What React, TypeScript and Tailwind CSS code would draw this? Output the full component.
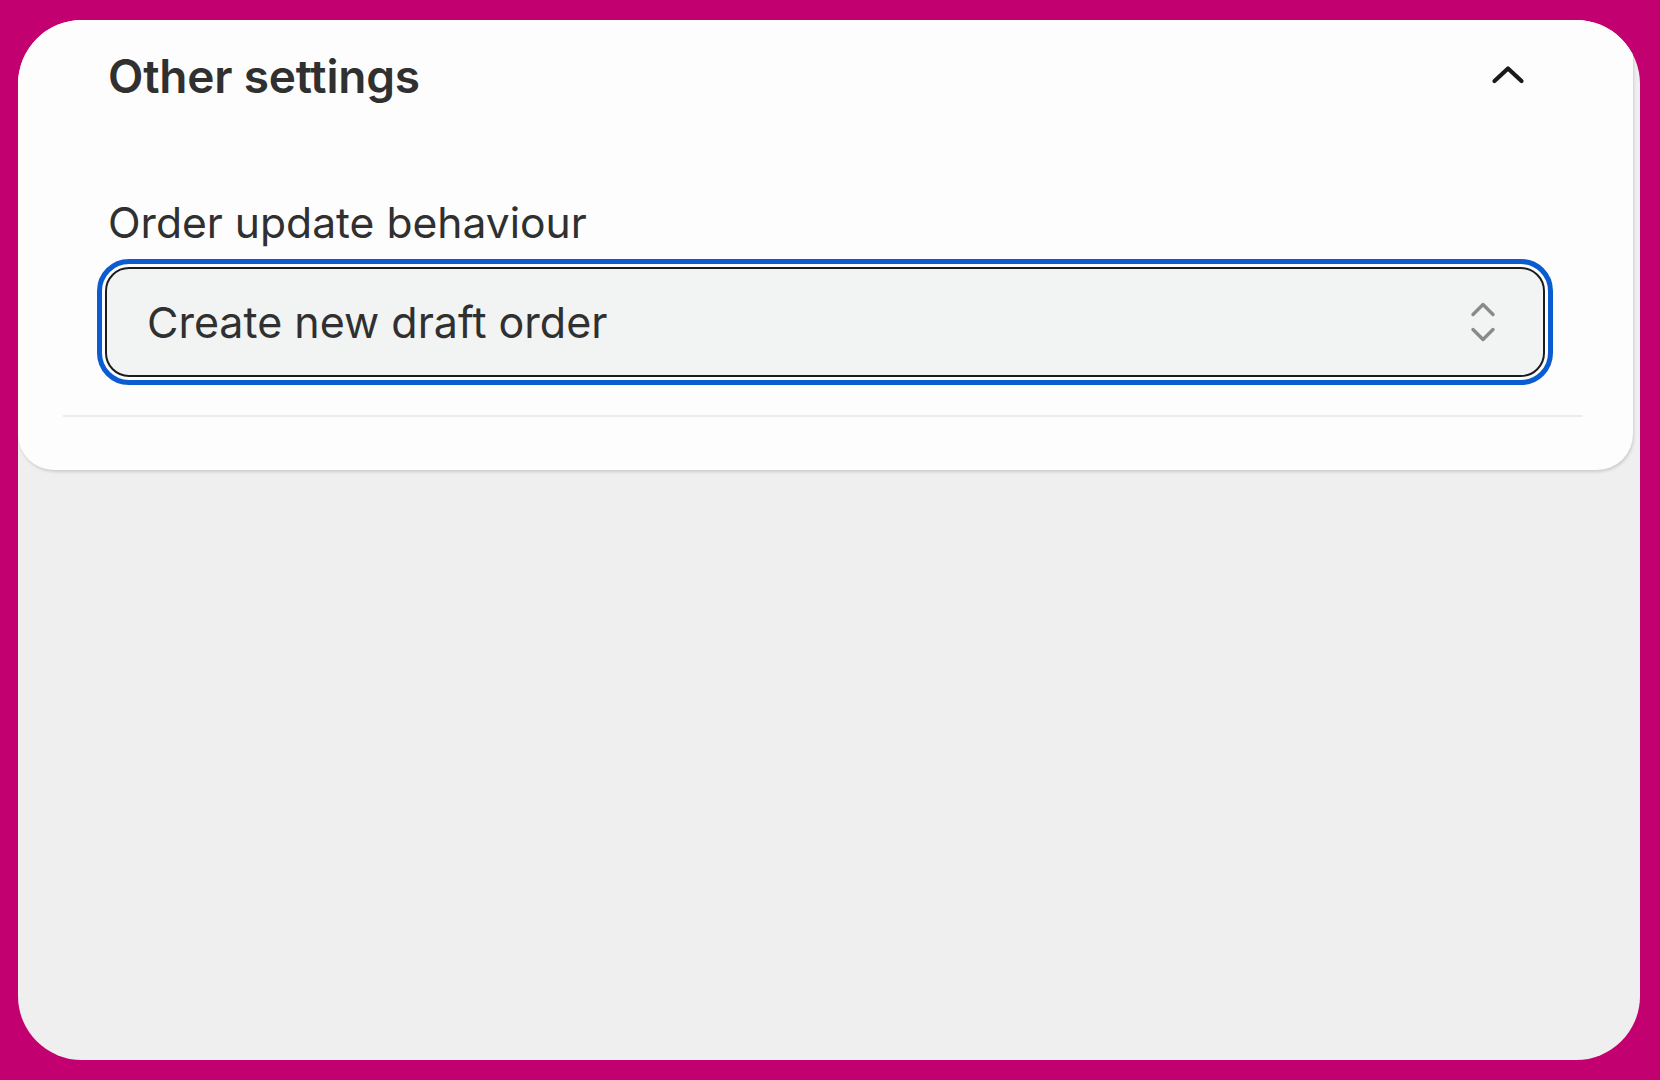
import React from "react";

export default function App() {
  return (
    <div className="w-[1660px] h-[1080px] bg-[#c2006f] pt-[20px] pl-[18px] pr-[20px] pb-[20px]" style={{ fontFamily: "Inter, 'Noto Sans', sans-serif" }}>
      <div className="h-[1040px] rounded-[64px] overflow-hidden bg-[#efefef]">
        <div className="mr-[7px] bg-[#fdfdfe] rounded-b-[36px] shadow-[1px_2px_3px_rgba(0,0,0,0.14)] pl-[87px] pr-[88px] pt-[30px] pb-[53px]">
          <div className="flex items-center justify-between h-[52px]">
            <h2 className="pl-[3px] text-[46px] leading-[52px] font-semibold text-[#303030] tracking-[-0.2px]">Other settings</h2>
            <svg className="mr-[20px] mt-[-3px]" width="34" height="20" viewBox="0 0 34 20" fill="none">
              <path d="M3.5 16 L17 3.5 L30.5 16" stroke="#1a1a1a" strokeWidth="4.2" strokeLinecap="round" strokeLinejoin="round" />
            </svg>
          </div>
          <div className="mt-[95px] pl-[3px] text-[42.6px] leading-[52px] text-[#303030]">Order update behaviour</div>
          <div className="mt-[18px] h-[110px] flex items-center justify-between bg-[#f2f3f3] border-[2.5px] border-[#1c1c1c] rounded-[24px] outline-[5px] outline-solid outline-offset-[3px] outline-[#0b5cd1] pl-[40px] pr-[47px]">
            <span className="text-[43px] leading-[52px] text-[#303030]">Create new draft order</span>
            <svg width="26" height="42" viewBox="0 0 26 42" fill="none">
              <path d="M3 13.5 L13 3.5 L23 13.5" stroke="#8a8a8a" strokeWidth="3.4" strokeLinecap="round" strokeLinejoin="round" />
              <path d="M3 28.5 L13 38.5 L23 28.5" stroke="#8a8a8a" strokeWidth="3.4" strokeLinecap="round" strokeLinejoin="round" />
            </svg>
          </div>
          <div className="mt-[38px] ml-[-42px] mr-[-38px] h-[2px] bg-[#ececec]" />
        </div>
      </div>
    </div>
  );
}
